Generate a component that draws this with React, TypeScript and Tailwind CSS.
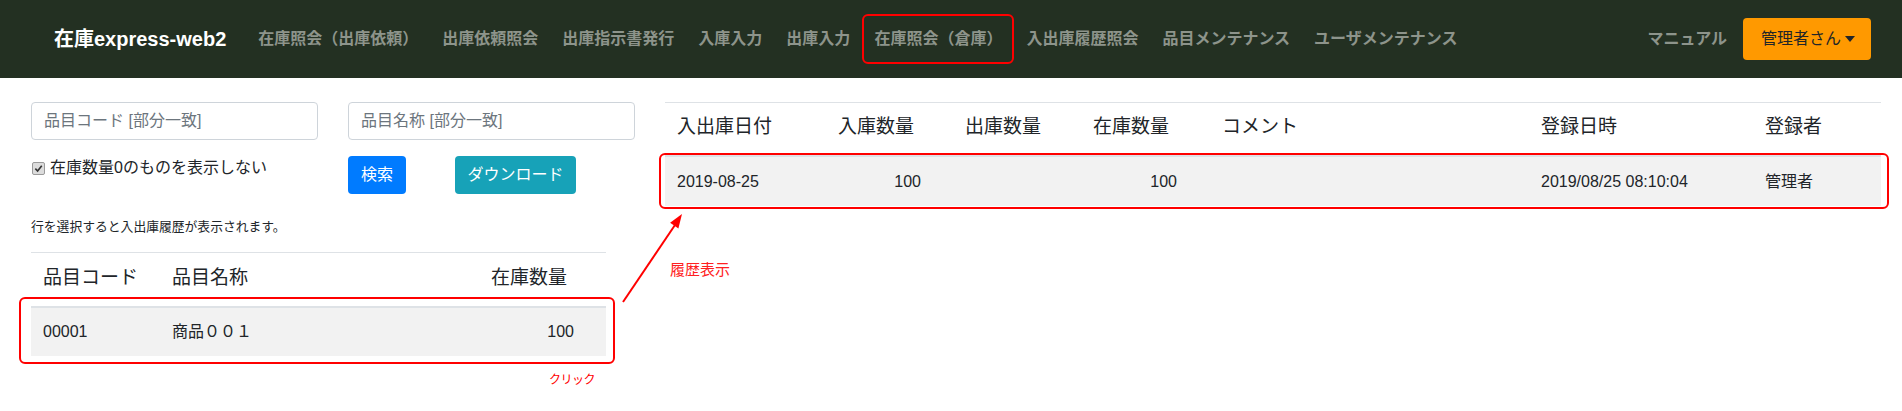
import React from "react";

const font = { fontFamily: '"Liberation Sans", "Noto Sans CJK JP", sans-serif' };

const navItems = [
  "在庫照会（出庫依頼）",
  "出庫依頼照会",
  "出庫指示書発行",
  "入庫入力",
  "出庫入力",
  "在庫照会（倉庫）",
  "入出庫履歴照会",
  "品目メンテナンス",
  "ユーザメンテナンス",
];

export default function App() {
  return (
    <div className="relative w-[1902px] h-[411px] bg-white text-[#212529] overflow-hidden" style={font}>
      {/* Navbar */}
      <div className="h-[78px] bg-[#233022] flex items-center pl-[54px] pr-[31px]">
        <div className="text-white font-bold text-[20px] mr-[20px]">在庫express-web2</div>
        <div className="flex items-center">
          {navItems.map((n) => (
            <div
              key={n}
              className="relative h-[50px] flex items-center px-3 text-[16px] font-bold text-[#8d948b]"
            >
              {n}
              {n === "在庫照会（倉庫）" && (
                <div className="absolute inset-0 border-2 border-[#ff0000] rounded-[6px]" />
              )}
            </div>
          ))}
        </div>
        <div className="ml-auto flex items-center">
          <div className="text-[16px] font-bold text-[#8d948b] mr-[16px]">マニュアル</div>
          <div className="h-[42px] w-[128px] bg-[#ff9900] rounded-[4px] flex items-center pl-[18px] text-[16px] text-[#212529]">
            管理者さん
            <span className="ml-[4px] w-0 h-0 border-l-[5px] border-r-[5px] border-t-[6px] border-l-transparent border-r-transparent border-t-[#212529]" />
          </div>
        </div>
      </div>

      {/* Body */}
      <div className="flex">
        {/* Left column */}
        <div className="ml-[31px] w-[604px] pt-[24px]">
          <div className="flex gap-[30px]">
            <div className="w-[287px] h-[38px] border border-[#ced4da] rounded-[4px] flex items-center pl-[12px] text-[16px] text-[#6c757d]">
              品目コード [部分一致]
            </div>
            <div className="w-[287px] h-[38px] border border-[#ced4da] rounded-[4px] flex items-center pl-[12px] text-[16px] text-[#6c757d]">
              品目名称 [部分一致]
            </div>
          </div>
          <div className="flex items-start mt-[16px]">
            <div className="w-[317px] flex items-center h-[24px] text-[16px]">
              <span className="ml-[1px] w-[13px] h-[13px] rounded-[2px] bg-[#dcdcdc] border border-[#9a9a9a] flex items-center justify-center">
                <svg width="9" height="9" viewBox="0 0 10 10">
                  <path d="M1.5 5.2 L4 7.8 L8.6 2" fill="none" stroke="#333" strokeWidth="1.8" />
                </svg>
              </span>
              <span className="ml-[5px]">在庫数量0のものを表示しない</span>
            </div>
            <div className="w-[58px] h-[38px] bg-[#007bff] rounded-[4px] text-white text-[16px] flex items-center justify-center">
              検索
            </div>
            <div className="ml-[49px] w-[121px] h-[38px] bg-[#17a2b8] rounded-[4px] text-white text-[16px] flex items-center justify-center">
              ダウンロード
            </div>
          </div>
          <div className="mt-[23px] text-[12.8px] leading-[19px]">行を選択すると入出庫履歴が表示されます。</div>
          <div className="w-[575px] mt-[16px] border-t border-[#dee2e6]">
            <div className="grid grid-cols-[129px_1fr_auto] h-[53px] items-start pt-[11px] text-[19px] leading-[28px]">
              <div className="pl-3">品目コード</div>
              <div className="pl-3">品目名称</div>
              <div className="pr-[39px]">在庫数量</div>
            </div>
            <div className="grid grid-cols-[129px_1fr_auto] h-[50px] items-center border-t-2 border-[#dee2e6] bg-[#f2f2f2] text-[16px]">
              <div className="pl-3">00001</div>
              <div className="pl-3">商品００１</div>
              <div className="pr-[32px]">100</div>
            </div>
          </div>
        </div>

        {/* Right column */}
        <div className="ml-[30px] w-[1216px] pt-[24px]">
          <div className="border-t border-[#dee2e6]">
            <div className="grid grid-cols-[161px_127px_128px_129px_319px_224px_1fr] h-[52px] items-start pt-[10px] text-[19px] leading-[28px]">
              <div className="pl-3">入出庫日付</div>
              <div className="pl-3">入庫数量</div>
              <div className="pl-3">出庫数量</div>
              <div className="pl-3">在庫数量</div>
              <div className="pl-3">コメント</div>
              <div className="pl-3">登録日時</div>
              <div className="pl-3">登録者</div>
            </div>
            <div className="grid grid-cols-[161px_127px_128px_129px_319px_224px_1fr] h-[51px] items-center border-t-2 border-[#dee2e6] bg-[#f2f2f2] text-[16px]">
              <div className="pl-3">2019-08-25</div>
              <div className="pr-[32px] text-right">100</div>
              <div />
              <div className="pr-[33px] text-right">100</div>
              <div />
              <div className="pl-3">2019/08/25 08:10:04</div>
              <div className="pl-3">管理者</div>
            </div>
          </div>
        </div>
      </div>

      {/* Annotations */}
      <div className="absolute left-[19px] top-[297px] w-[596px] h-[67px] border-2 border-[#ff0000] rounded-[6px]" />
      <div className="absolute left-[659px] top-[153px] w-[1230px] h-[56px] border-2 border-[#ff0000] rounded-[6px]" />
      <svg className="absolute left-[615px] top-[205px]" width="80" height="105" viewBox="0 0 80 105">
        <line x1="8" y1="97" x2="60" y2="20" stroke="#ff0000" strokeWidth="2" />
        <polygon points="67,9 63.4,23.4 55.1,17.8" fill="#ff0000" />
      </svg>
      <div className="absolute left-[670px] top-[260px] text-[15px] leading-[20px] text-[#ff2020]">履歴表示</div>
      <div className="absolute left-[549px] top-[372px] text-[12px] leading-[16px] text-[#ff0000] tracking-[-0.5px]">クリック</div>
    </div>
  );
}
